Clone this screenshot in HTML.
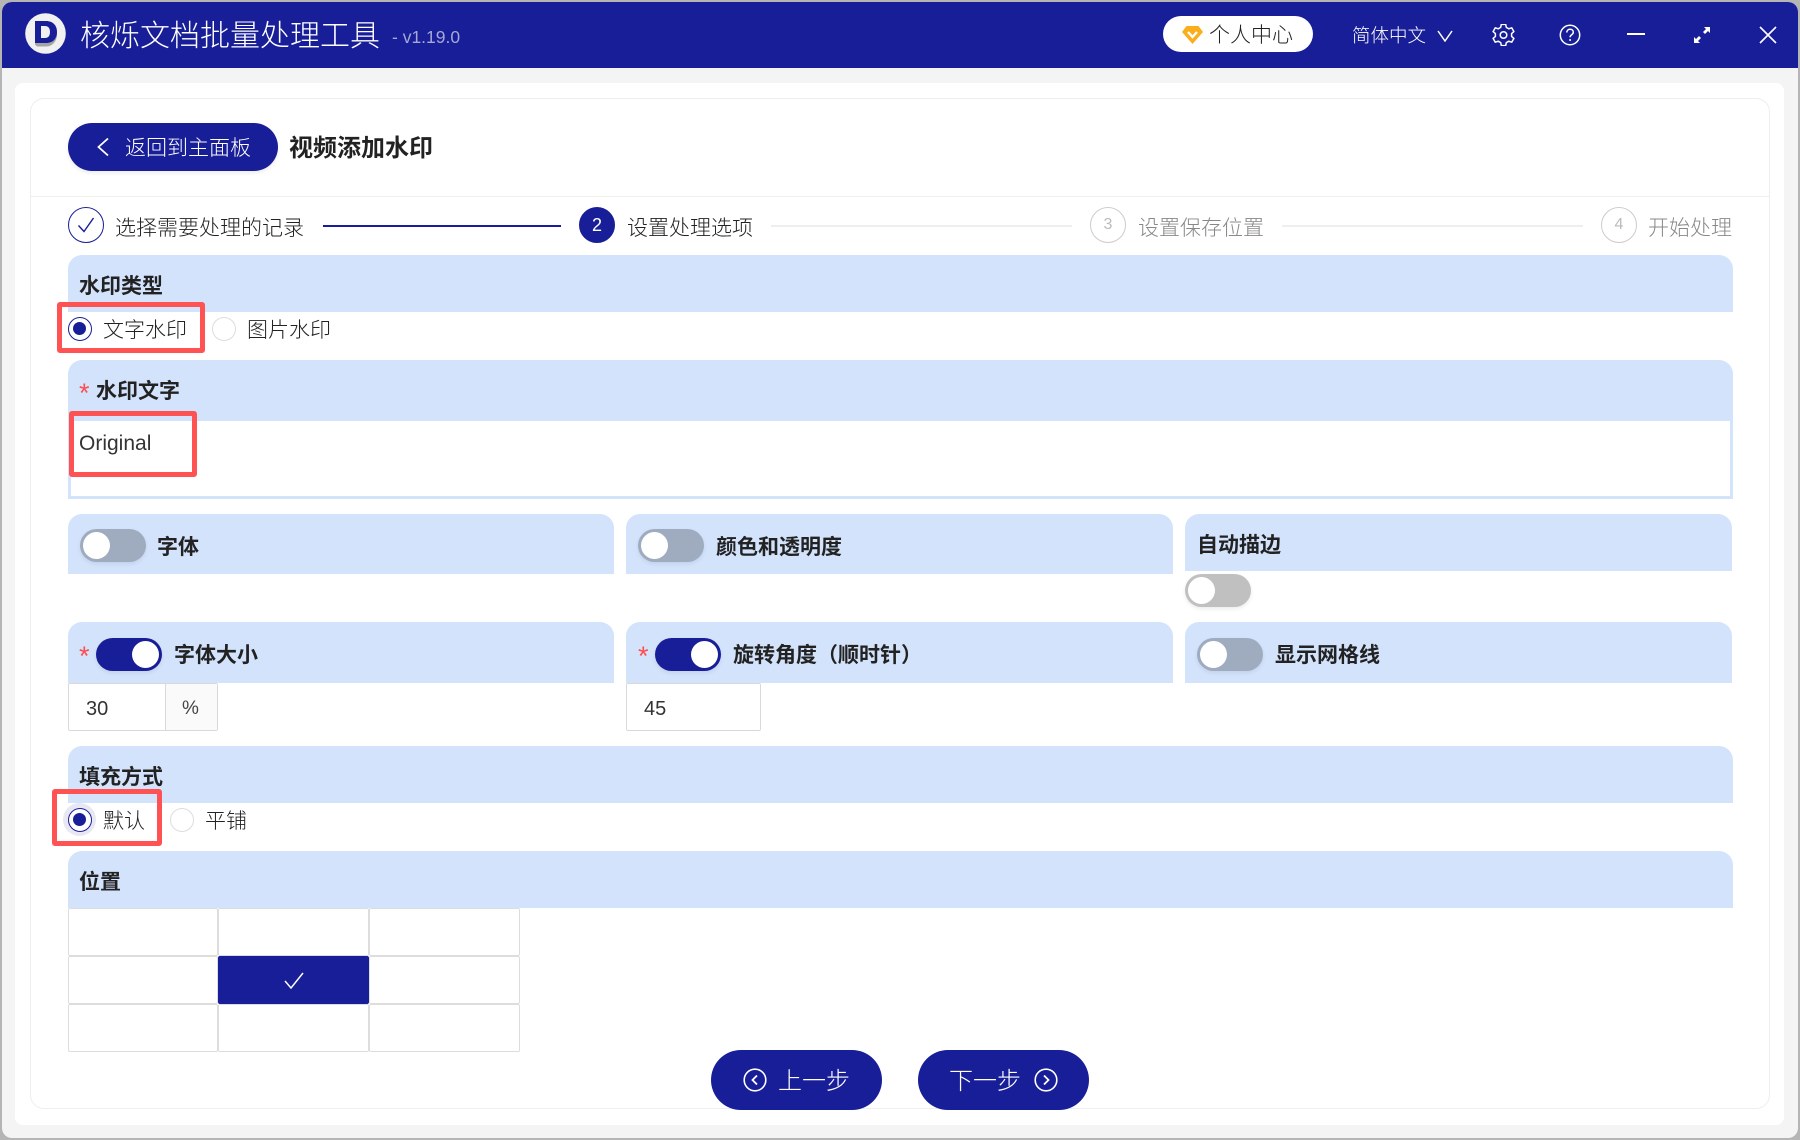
<!DOCTYPE html>
<html lang="zh-CN"><head><meta charset="utf-8"><title>核烁文档批量处理工具</title>
<style>
*{box-sizing:border-box;margin:0;padding:0}
html,body{width:1800px;height:1140px;overflow:hidden;background:#b5b5b5;font-family:"Liberation Sans","Noto Sans CJK SC",sans-serif;color:#222}
div,svg,span{position:absolute}
.t{white-space:nowrap;line-height:30px;height:30px;font-size:21px;margin-top:2px;font-weight:300}
.b{font-weight:700;color:#222}
.sec{background:#d3e3fc;border-radius:14px 14px 0 0}
.st{width:36px;height:36px;border-radius:50%;top:208px;border:1.5px solid #ccc;color:#bbb;font-size:16px;text-align:center;line-height:34px}
.gray{color:#888}
.radio{width:24px;height:24px;border-radius:50%;border:1.5px solid #181e97;background:#fff}
.radio i{position:absolute;left:4px;top:4px;width:13px;height:13px;border-radius:50%;background:#181e97}
.radio.off{border-color:#ddd}
.red{border:5px solid #ff5252;border-radius:3px}
.tg{width:66px;height:33px;border-radius:17px;background:#9fabbf;box-shadow:0 2px 4px rgba(0,0,0,.08)}
.tg i{position:absolute;left:3px;top:3px;width:27px;height:27px;border-radius:50%;background:#fff}
.tg.on{background:#181e97}.tg.on i{left:36px}
.req{color:#ff4d4f;font-size:27px;line-height:30px;height:30px}
.input{border:1px solid #d9d9d9;border-radius:2px;background:#fff}
.cell{border:1px solid #ddd;border-radius:2px;background:#fff}
.btn{background:#181e97;border-radius:30px;top:1050px;height:60px;width:171px}
</style></head><body>
<div style="left:2px;top:2px;width:1796px;height:1136px;background:#f4f4f4;border-radius:10px;overflow:hidden">
<div style="left:0;top:0;width:1796px;height:66px;background:#181e97"></div>
</div>

<!-- header -->
<svg style="left:25px;top:13px" width="41" height="41" viewBox="0 0 41 41"><circle cx="20.500" cy="20.500" r="20.300" fill="#f1f1f1"/><path d="M10 31.500V11h11c7 0 11 4.500 11 10.500s-4 12-11 12H12z" fill="#a5a5a5"/><path d="M10 8h11c7 0 11 4.500 11 11s-4 11-11 11H10z" fill="#181e97"/><path d="M16 13h4c3.500 0 5 2.500 5 6s-1.500 6-5 6h-4z" fill="#f1f1f1"/></svg>
<div class="t" style="left:80px;top:15px;height:40px;line-height:40px;font-size:30px;color:#fff">核烁文档批量处理工具</div>
<div class="t" style="left:392px;top:20px;font-size:17.500px;color:#a4a9d6">- v1.19.0</div>

<div style="left:1163px;top:16px;width:150px;height:36px;border-radius:18px;background:#fff"></div>
<svg style="left:1182px;top:26px" width="21" height="18" viewBox="0 0 21 18"><path d="M4.500 0h12L21 6 10.500 18 0 6z" fill="#fbae1c"/><path d="M6 6l4.500 5L15 6" fill="none" stroke="#fff" stroke-width="2.400"/></svg>
<div class="t" style="left:1209px;top:19px;color:#222">个人中心</div>
<div class="t" style="left:1352px;top:19px;font-size:18.500px;color:#fff">简体中文</div>
<svg style="left:1437px;top:30px" width="16" height="12" viewBox="0 0 16 12"><path d="M1 1l7 10 7-10" fill="none" stroke="#fff" stroke-width="1.500"/></svg>
<svg style="left:1492px;top:24px" width="23" height="22" viewBox="0 0 23 22"><path d="M9.300 1.200h4.400l.6 3 2.500 1.400 2.900-1 2.200 3.800-2.300 2v2.800l2.300 2-2.200 3.800-2.900-1-2.500 1.400-.6 3H9.300l-.6-3-2.500-1.400-2.900 1-2.200-3.800 2.300-2V10.400l-2.300-2 2.200-3.800 2.900 1 2.500-1.400z" transform="translate(0 -.8)" fill="none" stroke="#fff" stroke-width="1.500" stroke-linejoin="round"/><circle cx="11.500" cy="11" r="3.300" fill="none" stroke="#fff" stroke-width="1.500"/></svg>
<svg style="left:1559px;top:24px" width="22" height="22" viewBox="0 0 22 22"><circle cx="11" cy="11" r="9.700" fill="none" stroke="#fff" stroke-width="1.500"/><path d="M7.800 8.500c0-2 1.400-3.200 3.300-3.200s3.200 1.200 3.200 2.900c0 2.500-3.200 2.500-3.200 5" fill="none" stroke="#fff" stroke-width="1.500"/><circle cx="11.100" cy="16" r="1" fill="#fff"/></svg>
<div style="left:1627px;top:33px;width:18px;height:2px;background:#fff"></div>
<svg style="left:1693px;top:26px" width="18" height="18" viewBox="0 0 18 18"><path d="M11 1h6v6l-2-2-3 3-2-2 3-3zM7 17H1v-6l2 2 3-3 2 2-3 3z" fill="#fff"/></svg>
<svg style="left:1759px;top:26px" width="18" height="18" viewBox="0 0 18 18"><path d="M1 1l16 16M17 1L1 17" stroke="#fff" stroke-width="1.600"/></svg>

<!-- panels -->
<div style="left:15px;top:83px;width:1769px;height:1042px;background:#fff;border-radius:8px"></div>
<div style="left:30px;top:98px;width:1740px;height:1011px;background:#fff;border:1px solid #eee;border-radius:14px"></div>
<div style="left:30px;top:196px;width:1740px;height:1px;background:#eee"></div>

<div style="left:68px;top:123px;width:210px;height:48px;border-radius:24px;background:#181e97;box-shadow:0 2px 4px rgba(0,0,0,.08)"></div>
<svg style="left:96px;top:137px" width="14" height="20" viewBox="0 0 14 20"><path d="M12 1.500L2.500 10l9.500 8.500" fill="none" stroke="#fff" stroke-width="1.800"/></svg>
<div class="t" style="left:125px;top:132px;color:#fff">返回到主面板</div>
<div class="t b" style="left:289px;top:132px;font-size:24px">视频添加水印</div>

<!-- steps -->
<div class="st" style="left:68px;top:207px;border-color:#181e97"></div>
<svg style="left:77px;top:216px" width="18" height="18" viewBox="0 0 18 18"><path d="M1.500 9.500l5.500 6L16.500 2" fill="none" stroke="#181e97" stroke-width="1.400"/></svg>
<div class="t" style="left:115px;top:212px">选择需要处理的记录</div>
<div style="left:323px;top:225px;width:238px;height:2px;background:#181e97"></div>
<div class="st" style="left:579px;top:207px;background:#181e97;border-color:#181e97;color:#fff;font-size:18px">2</div>
<div class="t" style="left:627px;top:212px">设置处理选项</div>
<div style="left:771px;top:225px;width:301px;height:2px;background:#eee"></div>
<div class="st" style="left:1090px;top:207px">3</div>
<div class="t gray" style="left:1138px;top:212px">设置保存位置</div>
<div style="left:1282px;top:225px;width:301px;height:2px;background:#eee"></div>
<div class="st" style="left:1601px;top:207px">4</div>
<div class="t gray" style="left:1648px;top:212px">开始处理</div>

<!-- 水印类型 -->
<div class="sec" style="left:68px;top:255px;width:1665px;height:57px"></div>
<div class="t b" style="left:79px;top:270px">水印类型</div>
<div class="radio" style="left:68px;top:317px"><i></i></div>
<div class="t" style="left:103px;top:314px">文字水印</div>
<div class="radio off" style="left:212px;top:317px"></div>
<div class="t" style="left:247px;top:314px">图片水印</div>
<div class="red" style="left:57px;top:302px;width:148px;height:51px"></div>

<!-- 水印文字 -->
<div class="sec" style="left:68px;top:360px;width:1665px;height:61px"></div>
<div style="left:68px;top:421px;width:1665px;height:78px;border:3px solid #d3e3fc;border-top:0;background:#fff"></div>
<div class="req" style="left:79px;top:378px">*</div>
<div class="t b" style="left:96px;top:375px">水印文字</div>
<div class="t" style="left:79px;top:427px;color:#333">Original</div>
<div class="red" style="left:69px;top:411px;width:128px;height:66px"></div>

<!-- row 1 -->
<div class="sec" style="left:68px;top:514px;width:546px;height:60px"></div>
<div class="tg" style="left:80px;top:529px"><i></i></div>
<div class="t b" style="left:157px;top:531px">字体</div>
<div class="sec" style="left:626px;top:514px;width:547px;height:60px"></div>
<div class="tg" style="left:638px;top:529px"><i></i></div>
<div class="t b" style="left:716px;top:531px">颜色和透明度</div>
<div class="sec" style="left:1185px;top:514px;width:547px;height:57px"></div>
<div class="t b" style="left:1197px;top:529px">自动描边</div>
<div class="tg" style="left:1185px;top:574px;background:#c0c0c0"><i></i></div>

<!-- row 2 -->
<div class="sec" style="left:68px;top:622px;width:546px;height:61px"></div>
<div class="req" style="left:79px;top:641px">*</div>
<div class="tg on" style="left:96px;top:638px"><i></i></div>
<div class="t b" style="left:174px;top:639px">字体大小</div>
<div class="input" style="left:68px;top:683px;width:150px;height:48px"></div>
<div style="left:165px;top:684px;width:52px;height:46px;background:#fafafa;border-left:1px solid #d9d9d9"></div>
<div class="t" style="left:86px;top:692px;font-size:20px;color:#333">30</div>
<div class="t" style="left:182px;top:692px;font-size:19px;color:#444">%</div>

<div class="sec" style="left:626px;top:622px;width:547px;height:61px"></div>
<div class="req" style="left:638px;top:641px">*</div>
<div class="tg on" style="left:655px;top:638px"><i></i></div>
<div class="t b" style="left:733px;top:639px">旋转角度（顺时针）</div>
<div class="input" style="left:626px;top:683px;width:135px;height:48px"></div>
<div class="t" style="left:644px;top:692px;font-size:20px;color:#333">45</div>

<div class="sec" style="left:1185px;top:622px;width:547px;height:61px"></div>
<div class="tg" style="left:1197px;top:638px"><i></i></div>
<div class="t b" style="left:1275px;top:639px">显示网格线</div>

<!-- 填充方式 -->
<div class="sec" style="left:68px;top:746px;width:1665px;height:57px"></div>
<div class="t b" style="left:79px;top:761px">填充方式</div>
<div style="left:63px;top:803px;width:33px;height:33px;border-radius:50%;background:#e8e8f4"></div>
<div class="radio" style="left:68px;top:808px"><i></i></div>
<div class="t" style="left:103px;top:805px">默认</div>
<div class="radio off" style="left:170px;top:808px"></div>
<div class="t" style="left:205px;top:805px">平铺</div>
<div class="red" style="left:52px;top:789px;width:110px;height:57px"></div>

<!-- 位置 -->
<div class="sec" style="left:68px;top:851px;width:1665px;height:57px"></div>
<div class="t b" style="left:79px;top:866px">位置</div>
<div class="cell" style="left:68px;top:908px;width:150px;height:48px"></div>
<div class="cell" style="left:218px;top:908px;width:151px;height:48px"></div>
<div class="cell" style="left:369px;top:908px;width:151px;height:48px"></div>
<div class="cell" style="left:68px;top:956px;width:150px;height:48px"></div>
<div class="cell" style="left:218px;top:956px;width:151px;height:48px;background:#181e97;border-color:#181e97"></div>
<div class="cell" style="left:369px;top:956px;width:151px;height:48px"></div>
<div class="cell" style="left:68px;top:1004px;width:150px;height:48px"></div>
<div class="cell" style="left:218px;top:1004px;width:151px;height:48px"></div>
<div class="cell" style="left:369px;top:1004px;width:151px;height:48px"></div>
<svg style="left:284px;top:972px" width="20" height="17" viewBox="0 0 20 17"><path d="M1 9l6 7L19 1" fill="none" stroke="#fff" stroke-width="1.500"/></svg>

<!-- buttons -->
<div class="btn" style="left:711px"></div>
<svg style="left:743px;top:1068px" width="24" height="24" viewBox="0 0 24 24"><circle cx="12" cy="12" r="10.800" fill="none" stroke="#fff" stroke-width="1.600"/><path d="M14 7.500L9.500 12l4.500 4.500" fill="none" stroke="#fff" stroke-width="1.800"/></svg>
<div class="t" style="left:778px;top:1065px;font-size:24px;color:#fff">上一步</div>
<div class="btn" style="left:918px"></div>
<div class="t" style="left:949px;top:1065px;font-size:24px;color:#fff">下一步</div>
<svg style="left:1034px;top:1068px" width="24" height="24" viewBox="0 0 24 24"><circle cx="12" cy="12" r="10.800" fill="none" stroke="#fff" stroke-width="1.600"/><path d="M10 7.500l4.500 4.500-4.500 4.500" fill="none" stroke="#fff" stroke-width="1.800"/></svg>
</body></html>
